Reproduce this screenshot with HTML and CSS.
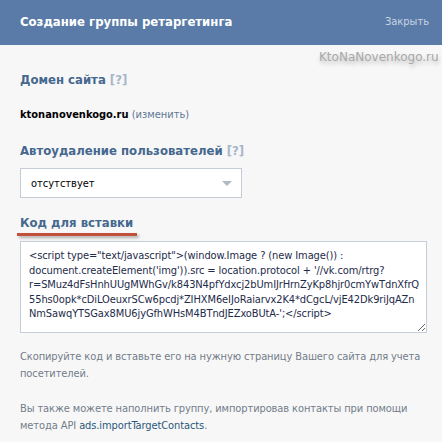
FILE: index.html
```html
<!DOCTYPE html>
<html>
<head>
    <meta name="viewport" content="width=device-width, initial-scale=1">
    <title>Создание группы ретаргетинга</title>
    <link rel="stylesheet" href="styles.css">
</head>
<body>
    <div class="box">
        <div class="box-header">
            <div class="box-title">Создание группы ретаргетинга</div>
            <a href="#" class="box-close">Закрыть</a>
        </div>
        <div class="watermark">KtoNaNovenkogo.ru</div>
        <div class="box-body">
            <div class="label label-first">Домен сайта <span class="hint">[?]</span></div>
            <div class="domain">
                <b>ktonanovenkogo.ru</b> <a href="#" class="domain-edit">(изменить)</a>
            </div>
            <div class="label">Автоудаление пользователей <span class="hint">[?]</span></div>
            <div class="select">
                <span>отсутствует</span>
                <span class="select-arrow"></span>
            </div>
            <div class="label label-code">Код для вставки</div>
            <div class="code-underline"></div>
            <textarea class="code" readonly>&lt;script type="text/javascript"&gt;(window.Image ? (new Image()) :
document.createElement('img')).src = location.protocol + '//vk.com/rtrg?
r=SMuz4dFsHnhUUgMWhGv/k843N4pfYdxcj2bUmIJrHrnZyKp8hjr0cmYwTdnXfrQ
55hs0opk*cDiLOeuxrSCw6pcdj*ZIHXM6eIJoRaiarvx2K4*dCgcL/vjE42Dk9riJqAZn
NmSawqYTSGax8MU6jyGfhWHsM4BTndJEZxoBUtA-';&lt;/script&gt;</textarea>
            <p class="note">Скопируйте код и вставьте его на нужную страницу Вашего сайта для учета посетителей.</p>
            <p class="note">Вы также можете наполнить группу, импортировав контакты при помощи метода API <a href="#" class="api-link">ads.importTargetContacts</a>.</p>
        </div>
    </div>
</body>
</html>
```

FILE: styles.css
```css
body {
    margin: 0;
    background: #f7f7f7;
    font-family: "DejaVu Sans Condensed", "DejaVu Sans", sans-serif;
    font-size: 11px;
    color: #000;
}

.box {
    position: relative;
    width: 442px;
    height: 442px;
    overflow: hidden;
}

.box-header {
    display: flex;
    align-items: center;
    justify-content: space-between;
    height: 45px;
    padding: 0 13px 3px 20px;
    box-sizing: border-box;
    background: #5a7ba7;
}

.box-title {
    color: #fff;
    font-weight: bold;
    font-size: 13px;
}

.box-close {
    color: #c8d4e4;
    font-size: 11px;
    text-decoration: none;
}

/* site watermark on top of the dialog */
.watermark {
    position: absolute;
    top: 50px;
    left: 319px;
    font-family: "DejaVu Sans", Verdana, sans-serif;
    font-size: 12px;
    color: #a8a8a8;
    text-shadow: 1px 3px 4px rgba(0,0,0,0.25);
}

.box-body {
    padding: 0 8px 0 20px;
}

.label {
    color: #45688e;
    font-weight: bold;
    font-size: 13px;
    line-height: 16px;
    margin-top: 20px;
}

.label-first {
    margin-top: 27px;
}

.hint {
    color: #a6b6ca;
}

.domain {
    line-height: 16px;
    margin-top: 19px;
}

.domain-edit {
    color: #5e7896;
    text-decoration: none;
}

.select {
    display: flex;
    align-items: center;
    justify-content: space-between;
    width: 222px;
    height: 30px;
    margin-top: 9px;
    padding: 0 9px 0 10px;
    box-sizing: border-box;
    background: #fff;
    border: 1px solid #c5ccd7;
}

.select-arrow {
    width: 0;
    height: 0;
    border-left: 5px solid transparent;
    border-right: 5px solid transparent;
    border-top: 5px solid #b2b9c6;
}

.label-code {
    display: inline-block;
    margin-top: 17px;
}

.code-underline {
    width: 120px;
    height: 3px;
    margin: 2px 0 0 -3px;
    background: #c3503b;
    box-shadow: 2px 2px 3px rgba(0,0,0,0.3);
}

.code {
    display: block;
    width: 407px;
    height: 92px;
    margin-top: 5px;
    padding: 7px 8px;
    box-sizing: border-box;
    border: 1px solid #c5cdd9;
    background: #fff;
    font-family: "DejaVu Sans Condensed", "DejaVu Sans", sans-serif;
    font-size: 11px;
    line-height: 14.6px;
    letter-spacing: -0.1px;
    color: #1e2b4a;
    white-space: pre;
    overflow: hidden;
    resize: both;
}

.note {
    margin: 16px 0 0 0;
    color: #737d8a;
    line-height: 16.5px;
    letter-spacing: -0.1px;
}

.note + .note {
    margin-top: 19px;
}

.api-link {
    color: #2b587a;
    text-decoration: none;
}
```
